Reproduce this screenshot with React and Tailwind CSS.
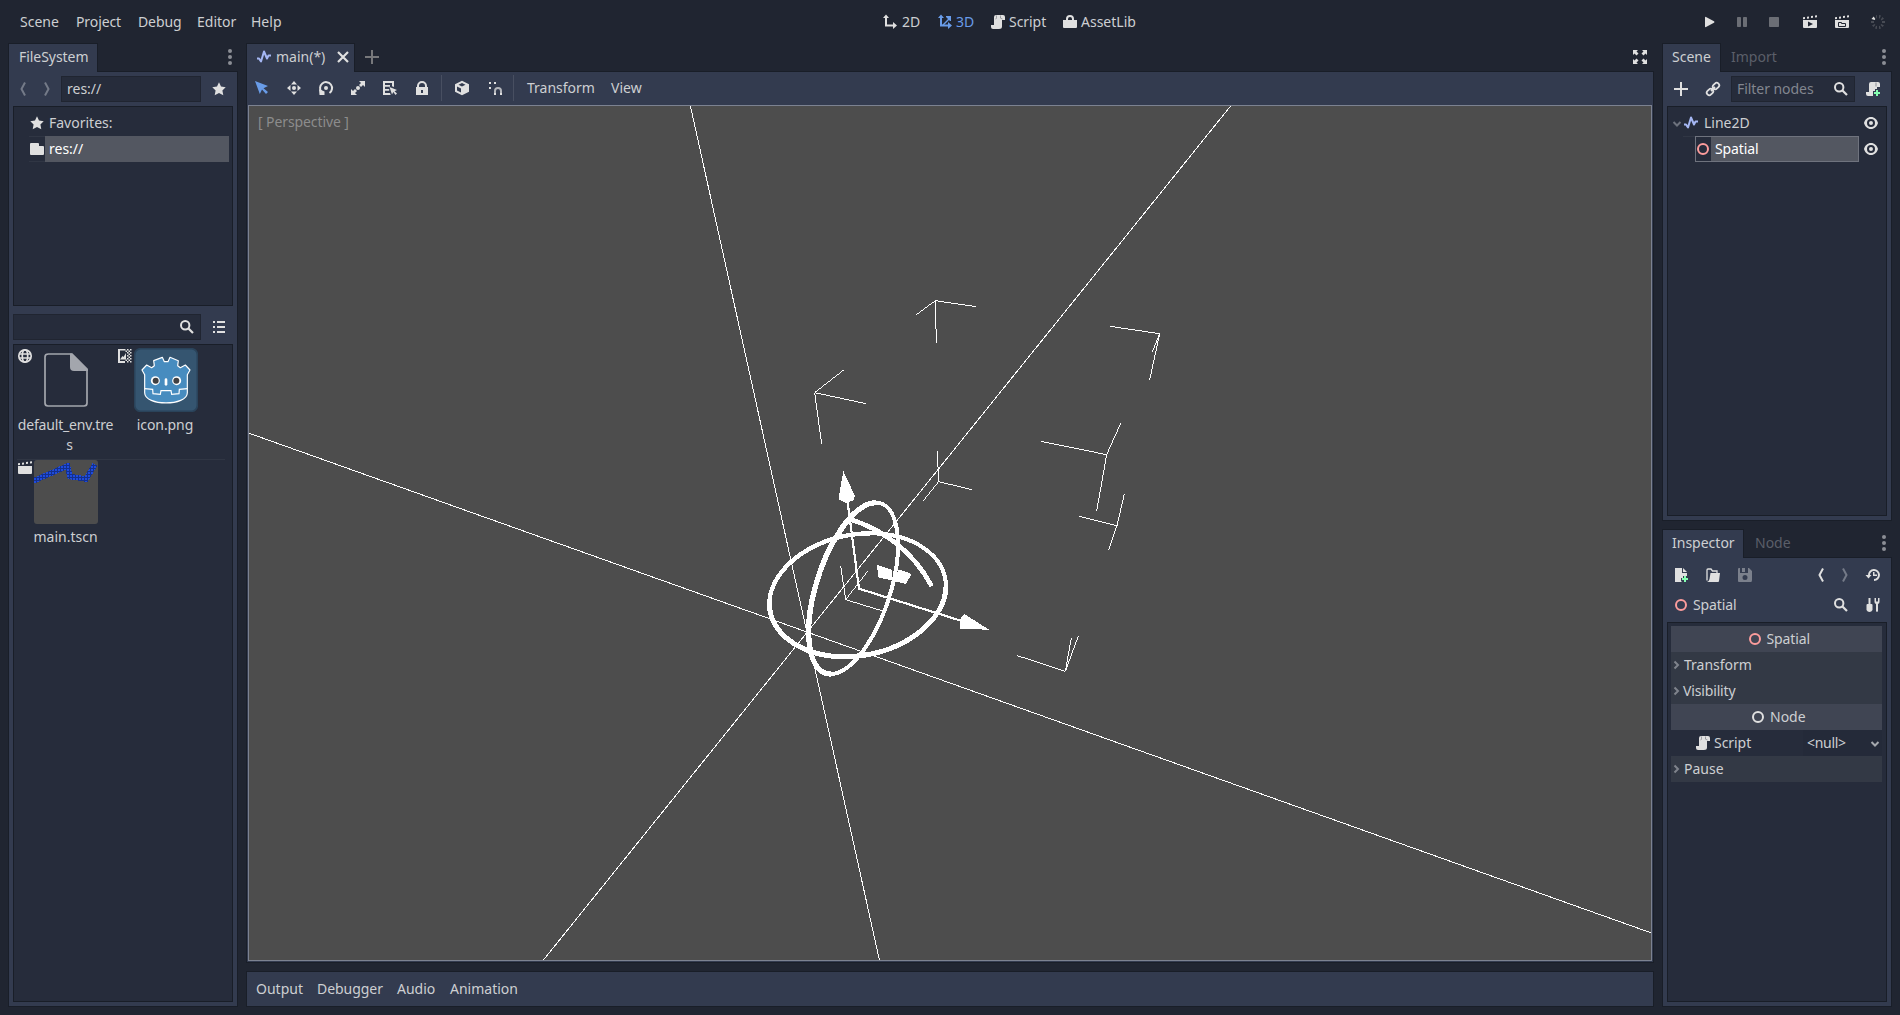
import React from "react";

const Icon = ({ className = "", children, fill = "#e0e0e0" }) => (
  <svg className={"h-4 w-4 shrink-0 " + className} viewBox="0 0 16 16" fill={fill}>
    {children}
  </svg>
);

const Star = (p) => (
  <Icon {...p}><path d="M8 1.300l2 4.200 4.700.700-3.300 3.300.900 4.800L8 12l-4.300 2.300.900-4.800L1.300 6.200 6 5.500z" /></Icon>
);
const Folder = (p) => (
  <Icon {...p}><path d="M2 2q-1 0-1 1v10q0 1 1 1h12q1 0 1-1V6q0-1-1-1h-4V3q0-1-1-1z" /></Icon>
);
const Search = (p) => (
  <Icon {...p}>
    <circle cx="6.200" cy="6.200" r="4.200" fill="none" stroke="#e0e0e0" strokeWidth="2" />
    <path d="M9.500 9.500L14 14" stroke="#e0e0e0" strokeWidth="2.200" />
  </Icon>
);
const Line2D = (p) => (
  <Icon {...p}>
    <path d="M1 10h2L5 13l3-10 3 7 1.500-3H15" transform="translate(0 -.5)" fill="none" stroke="#a5b7f3" strokeWidth="2" strokeLinejoin="round" />
  </Icon>
);
const Ring = ({ color = "#fc9c9c", className = "" }) => (
  <Icon className={className}><circle cx="8" cy="8" r="5" fill="none" stroke={color} strokeWidth="2" /></Icon>
);
const Chevron = ({ d, className = "", color = "#e0e0e0", w = 2 }) => (
  <Icon className={className}><path d={d} fill="none" stroke={color} strokeWidth={w} /></Icon>
);
const LEFT = "M10 1.500L6.500 8 10 14.500";
const RIGHT = "M6 1.500L9.500 8 6 14.500";
const Script = (p) => (
  <Icon {...p}>
    <path d="M6 1q-2 0-2 2v8H1v2q0 2 2 2h6q3 0 3-2.500V6h3V3q0-2-2-2z" />
    <path d="M6.500 1.500v2q0 1.500-1 1.500M10.500 1.500q-1 3.500 2 3.500" stroke="#202531" strokeOpacity=".35" fill="none" />
  </Icon>
);
const Eye = (p) => (
  <Icon {...p}>
    <path fillRule="evenodd" d="M8 2C4.500 2 2 4.500 1 8c1 3.500 3.500 6 7 6s6-2.500 7-6c-1-3.500-3.500-6-7-6zm0 2a4 4 0 110 8 4 4 0 010-8zm0 2a2 2 0 100 4 2 2 0 000-4z" />
  </Icon>
);
const Dots = () => (
  <svg className="h-4 w-[6px] shrink-0" viewBox="0 0 6 16" fill="#8b8e95">
    <circle cx="3" cy="2" r="2" /><circle cx="3" cy="8" r="2" /><circle cx="3" cy="14" r="2" />
  </svg>
);
const Clapper = ({ children, className }) => (
  <Icon className={className}>
    <path d="M1 3.300l2-.3v2l-2 .3zM5 2.700l2-.3v2l-2 .3zM9 2.100l2-.3v2l-2 .3zM13 1.500l2-.3v2l-2 .3z" />
    <path d="M1 6h14v7q0 1-1 1H2q-1 0-1-1z" />
    {children}
  </Icon>
);

const Panel = ({ className = "", children }) => (
  <div className={"border border-[#191e28] bg-[#333b4f] " + className}>{children}</div>
);
const Sunken = ({ className = "", children }) => (
  <div className={"border border-[#191e28] bg-[#262c3b] " + className}>{children}</div>
);
const Tab = ({ className = "", children }) => (
  <div className={"relative z-10 flex h-[29px] shrink-0 items-center border border-b-0 border-[#191e28] bg-[#333b4f] pb-[2px] " + className}>
    {children}
  </div>
);

function TopBar() {
  return (
    <header className="flex h-[43px] items-center">
      <nav className="flex h-[44px] w-[882px] items-center pl-5 whitespace-nowrap">
        <span className="w-14">Scene</span>
        <span className="w-[62px] tracking-[-0.1px]">Project</span>
        <span className="w-[59px] tracking-[-0.1px]">Debug</span>
        <span className="w-[54px]">Editor</span>
        <span>Help</span>
      </nav>
      <div className="flex h-[44px] w-[819px] items-center whitespace-nowrap">
        <Icon><path d="M4 1L1 4.500h2V13h8v2.500l4-3.500-4-3.500V11H5V4.500h2z" transform="translate(0 -.5)" /></Icon>
        <span className="ml-1 w-[35px]">2D</span>
        <Icon fill="#699ce8">
          <path d="M4 1L1 4.500h2V13h8v2.500l4-3.500-4-3.500V11H5V4.500h2z" transform="translate(0 -.5)" />
          <path d="M5 11l6-6-2-2V2h5v5h-1l-1-1-6 6z" />
        </Icon>
        <span className="ml-[3px] w-[34px] text-[#699ce8]">3D</span>
        <Script />
        <span className="ml-[3px] w-[53px] tracking-[-0.05px]">Script</span>
        <Icon><path fillRule="evenodd" d="M8 1a4 4 0 00-4 4v1H1v7q0 1 1 1h12q1 0 1-1V6h-3V5a4 4 0 00-4-4zm0 2a2 2 0 012 2v1H6V5a2 2 0 012-2z" /></Icon>
        <span className="ml-[3px]">AssetLib</span>
      </div>
      <div className="flex h-[44px] items-center">
        <Icon><path d="M4 3.500v9q0 1 1 .5l8-4.200q1-.8 0-1.500L5 3q-1-.5-1 .5z" /></Icon>
        <Icon className="ml-[17px]" fill="#6b6e75"><rect x="3" y="3" width="4" height="10" rx=".8" /><rect x="9" y="3" width="4" height="10" rx=".8" /></Icon>
        <Icon className="ml-4" fill="#6b6e75"><rect x="3" y="3" width="10" height="10" rx=".8" /></Icon>
        <Clapper className="ml-5"><path d="M6 7.500v5l5-2.500z" fill="#202531" /></Clapper>
        <Clapper className="ml-4"><path d="M4.500 8.500h3v1h4v3h-7z" fill="none" stroke="#202531" /></Clapper>
        <Icon className="ml-5" fill="#474b54">
          <path d="M6 1.500l1-.4v3l-.7.3zM9 1l2 .6-1.300 3-.7-.2zM12.500 3l1.500 1.700-2.700 1.700-.5-.8zM12 7h3v2h-3zM11.300 10l2.700 1.500L12.500 13 10.500 11zM9 12l.8-.3L11 14.400l-2 .6zM6 11.700l1 .3v3l-2-.6zM4.600 10l.8.8L3.500 13 2 11.500zM1 7h3v2H1z" />
          <path d="M3.700 2.500L5.300 5l-.7 1L1.500 5z" fill="#e0e0e0" />
        </Icon>
      </div>
    </header>
  );
}

function GodotIcon() {
  return (
    <svg className="h-16 w-16" viewBox="402 174 192 192">
      <rect x="404" y="176" width="188" height="188" rx="18" fill="#355570" stroke="#2a435a" strokeWidth="5" />
      <path
        d="M426 240L440 225 455 233 463 227 461 212 487 202 493 215H504L510 202 535 212 533 227 541 233 556 225 570 240 562 254V308C562 349 434 349 434 308V254z"
        fill="#478cbf" stroke="#fff" strokeWidth="3.500" strokeLinejoin="round"
      />
      <path d="M434 296L458 298 459 311 481 313 483 302H513L515 313 537 311 538 298 562 296" fill="none" stroke="#fff" strokeWidth="3.500" />
      <circle cx="466" cy="272" r="13.500" fill="#fff" />
      <circle cx="530" cy="272" r="13.500" fill="#fff" />
      <circle cx="467" cy="272" r="9" fill="#414042" />
      <circle cx="529" cy="272" r="9" fill="#414042" />
      <rect x="494" y="265" width="8" height="22" rx="4" fill="#fff" />
    </svg>
  );
}

function SceneThumb() {
  return (
    <svg className="h-16 w-16" viewBox="0 0 64 64">
      <defs>
        <pattern id="weave" width="3" height="3" patternUnits="userSpaceOnUse">
          <rect width="3" height="3" fill="#14308c" />
          <rect width="2" height="2" fill="#1f4bdc" />
        </pattern>
        <clipPath id="thumb"><rect width="64" height="64" rx="3" /></clipPath>
      </defs>
      <g clipPath="url(#thumb)">
        <rect width="64" height="64" fill="#4d4d4d" />
        <path d="M-2 21.500L33.500 6 36 16.500 52 19 61 4.500" fill="none" stroke="url(#weave)" strokeWidth="5.500" shapeRendering="crispEdges" />
      </g>
    </svg>
  );
}

function FileSystemDock() {
  return (
    <aside className="flex w-[230px] flex-col">
      <div className="flex h-7 items-start">
        <Tab className="w-[90px] pl-[10px]"><span className="tracking-[-0.05px]">FileSystem</span></Tab>
        <div className="ml-auto flex h-7 items-center pr-[5px]"><Dots /></div>
      </div>
      <Panel className="flex grow flex-col px-1 pt-1 pb-1">
        <div className="flex h-[26px] items-center">
          <Chevron d={LEFT} color="#747a88" className="ml-[2px]" />
          <Chevron d={RIGHT} color="#747a88" className="ml-2" />
          <Sunken className="ml-[6px] flex h-[26px] w-[140px] items-center border-[#202531] pl-[5px]">res://</Sunken>
          <Star className="ml-[10px]" />
        </div>
        <Sunken className="mt-1 h-[200px] pt-[3px]">
          <div className="flex h-[26px] items-center pl-[15px]">
            <Star /><span className="ml-1">Favorites:</span>
          </div>
          <div className="mr-[3px] ml-[15px] flex h-[26px] items-center border-y border-[#303644]">
            <Folder />
            <div className="flex h-[26px] grow items-center bg-[#535761] pl-1 text-white">res://</div>
          </div>
        </Sunken>
        <div className="mt-2 flex h-[26px] items-center">
          <Sunken className="flex h-[26px] w-[188px] items-center justify-end border-[#202531] pr-[5px]"><Search /></Sunken>
          <Icon className="ml-[10px]"><path d="M2 2h2v2H2zM6 2h8v2H6zM2 7h2v2H2zM6 7h8v2H6zM2 12h2v2H2zM6 12h8v2H6z" /></Icon>
        </div>
        <Sunken className="mt-1 grow px-[3px] pt-[3px]">
          <div className="flex h-[111px]">
            <div className="flex w-[100px] shrink-0">
              <Icon>
                <g fill="none" stroke="#e0e0e0" strokeWidth="1.700"><circle cx="8" cy="8" r="6.200" /><ellipse cx="8" cy="8" rx="2.700" ry="6.200" /><path d="M2 6h12M2 10h12" strokeWidth="1.300" /></g>
              </Icon>
              <div className="-ml-[16px] flex w-[97px] flex-col items-center">
                <svg className="h-16 w-16" viewBox="0 0 64 64">
                  <path d="M14.500 6h23.500L53 21v34q0 3-3 3H14q-3 0-3-3V9q0-3 3.500-3z" fill="none" stroke="#a3a6ad" strokeWidth="1.700" />
                  <path d="M36 5.500h2L54 21.500V23H40q-4 0-4-4z" fill="#a3a6ad" />
                </svg>
                <div className="mt-[3px] text-center leading-5 tracking-[-0.17px]">default_env.tre<br /><span className="ml-2">s</span></div>
              </div>
            </div>
            <div className="flex w-[100px]">
              <Icon>
                <path d="M1 1h6v1.500H3V13h5v2H1zM3 11.500l2.500-3.500 1 1L9 5v6.500z" />
                <path d="M7 1h1.500v1.500H7zM10 1h1.500v1.500H10zM13 1h1.500v1.500H13zM8.500 2.500H10V4H8.500zM11.500 2.500H13V4h-1.500zM10 4h1.500v1.500H10zM13 4h1.500v1.500H13zM11.500 5.500H13V7h-1.500zM10 7h1.500v1.500H10zM13 7h1.500v1.500H13zM11.500 8.500H13V10h-1.500zM10 10h1.500v1.500H10zM13 10h1.500v1.500H13zM8.500 11.500H10V13H8.500zM11.500 11.500H13V13h-1.500zM10 13h1.500v1.500H10zM13 13h1.500v1.500H13z" />
              </Icon>
              <div className="-ml-[16px] flex w-[98px] flex-col items-center">
                <GodotIcon />
                <div className="mt-[3px] -ml-[2px] leading-5 tracking-[-0.1px]">icon.png</div>
              </div>
            </div>
          </div>
          <div className="mr-1 flex border-t border-[#303644]">
            <Clapper className="mt-0" />
            <div className="-ml-[16px] flex w-[97px] flex-col items-center">
              <SceneThumb />
              <div className="mt-[3px] leading-5">main.tscn</div>
            </div>
          </div>
        </Sunken>
      </Panel>
    </aside>
  );
}

const CORNERS = [
  "M529 104L586 62 708 80M586 62L589 188",
  "M311 270L224 338 378 371M224 338L245 492",
  "M1110 139L1259 161 1237 215M1259 161L1229 300",
  "M903 484L1100 524 1142 430M1100 524L1070 693",
  "M592 513L596 605 696 629M596 605L550 662",
  "M1017 709L1131 737 1153 642M1131 737L1106 809",
  "M302 857L317 959 383 874M317 959L425 992",
  "M832 1127L976 1174 994 1074M976 1174L1015 1068",
];

function Viewport() {
  return (
    <svg className="block h-full w-full" viewBox="249 106 1402 854" shapeRendering="crispEdges" fill="none" stroke="#fff">
      <path d="M690.300 105.500L879.500 960.500M1231 105.500L543 960.500M248.500 433L1651.500 933" />
      <g transform="translate(740 280) scale(.33333)">
        {CORNERS.map((d) => <path key={d} d={d} strokeWidth="3" />)}
        <path d="M390 760A267.600 183.200 -11 0 0 88 966" strokeWidth="13" />
        <path d="M88 966A267.600 183.200 -11 0 0 618 920" strokeWidth="15" />
        <path d="M618 920A267.600 183.200 -11 0 0 390 760" strokeWidth="12" />
        <path d="M408 668A267.800 110.800 -72 0 0 272 1182" strokeWidth="16" />
        <path d="M408 668A267.800 110.800 -72 0 1 272 1182" strokeWidth="12" />
        <path d="M330 718C430 748 520 815 575 918" strokeWidth="14" />
        <path d="M322 660L357 926 662 1022" strokeWidth="6.500" />
        <g fill="#fff" stroke="none">
          <path d="M310 573L345 648 341 660 319 670 297 659 299 635zM673 1002L747 1049 660 1047 660 1018z" />
          <path d="M411 855L456 870 458 902 415 892zM476 868L515 882 497 912 460 903z" />
        </g>
      </g>
    </svg>
  );
}

function MainArea() {
  return (
    <main className="flex w-[1408px] flex-col">
      <div className="flex h-7 items-start">
        <Tab className="w-[109px] pl-[9px]">
          <Line2D /><span className="ml-[4px] w-[59px]">main(*)</span>
          <Icon><path d="M3 3l10 10M13 3L3 13" stroke="#e0e0e0" strokeWidth="2.200" /></Icon>
        </Tab>
        <div className="flex h-[27px] items-center pl-[9px]">
          <Icon><path d="M8 1v14M1 8h14" stroke="#77787b" strokeWidth="2" /></Icon>
        </div>
        <div className="ml-auto flex h-7 items-center pr-[6px]">
          <Icon>
            <path d="M1 1h5L4.500 2.500l2 2-2 2-2-2L1 6zM15 1v5l-1.500-1.500-2 2-2-2 2-2L10 1zM1 15v-5l1.500 1.500 2-2 2 2-2 2L6 15zM15 15h-5l1.500-1.500-2-2 2-2 2 2L15 10z" />
          </Icon>
        </div>
      </div>
      <Panel className="flex h-[892px] flex-col px-px">
        <div className="mb-px flex h-8 items-center pl-[6px]">
          <Icon fill="#699ce8"><path d="M1 1l4.800 13 2.200-4.500 4 4.500 2-2-4.500-3.800L14 6z" /></Icon>
          <Icon className="ml-4"><path d="M8 1l3 3.500H5zM8 15l3-3.500H5zM1 8l3.500-3v6zM15 8l-3.500-3v6z" /><circle cx="8" cy="8" r="2" /></Icon>
          <Icon className="ml-4">
            <path d="M11.500 13A6 6 0 103.500 12" fill="none" stroke="#e0e0e0" strokeWidth="2" />
            <circle cx="8" cy="8" r="2" /><path d="M1 9.500h1l4.500 2V15H1.500z" />
          </Icon>
          <Icon className="ml-4">
            <path d="M9 1h6v6l-2-2-2 2-2-2 2-2zM7 15H1V9l2 2 2-2 2 2-2 2z" /><circle cx="8" cy="8" r="2" />
          </Icon>
          <Icon className="ml-4">
            <path d="M1 1h11v6l-2-.7V3H3v10h5l.700 2H1zM3 5h5v1.700H3zM3 9h4.200v1.700H3z" />
            <path d="M7.500 7l2.500 7.500 1.300-2.500 2.200 3 1.500-1.500-2.500-2.300 2.500-1.200z" />
          </Icon>
          <Icon className="ml-4"><path fillRule="evenodd" d="M8 1a5 5 0 00-5 5v1H2v8h12V7h-1V6a5 5 0 00-5-5zm0 2a3 3 0 013 3v1H5V6a3 3 0 013-3zm-1 7h2v3H7z" /></Icon>
          <div className="ml-[11px] h-[26px] w-px bg-[#484f61]" />
          <Icon className="ml-3"><path fillRule="evenodd" d="M8 .8l7 3.500v7.400l-7 3.500-7-3.500V4.300zM8 3L4.500 4.800 8 6.500l3.500-1.700zM3 6.500v4L7 12.500v-4z" /></Icon>
          <Icon className="ml-[17px]">
            <path d="M2 2h2v2H2zM7 2h2v2H7zM2 7h2v2H2z" />
            <path d="M7 15v-4a4 4 0 018 0v4h-2v-4a2 2 0 00-4 0v4z" fillOpacity=".75" /><path d="M7 13h2v2H7zM13 13h2v2h-2z" />
          </Icon>
          <div className="ml-[10px] h-[26px] w-px bg-[#484f61]" />
          <span className="ml-[13px] w-[84px]">Transform</span>
          <span>View</span>
        </div>
        <div className="relative h-[856px] border border-[#7c8291] bg-[#4d4d4d]">
          <Viewport />
          <span className="absolute top-[6px] left-[9px] leading-5 tracking-[-0.1px] text-[#8c8c8c]">[ Perspective ]</span>
        </div>
      </Panel>
      <Panel className="mt-2 flex h-9 items-center pl-[9px]">
        <span className="w-[61px]">Output</span>
        <span className="w-[80px] tracking-[-0.05px]">Debugger</span>
        <span className="w-[53px]">Audio</span>
        <span>Animation</span>
      </Panel>
    </main>
  );
}

function SceneDock() {
  return (
    <section>
      <div className="flex h-7 items-start">
        <Tab className="w-[59px] pl-[9px]">Scene</Tab>
        <span className="ml-[10px] leading-7 text-[#5b5f69]">Import</span>
        <div className="ml-auto flex h-7 items-center pr-[5px]"><Dots /></div>
      </div>
      <Panel className="h-[450px] px-1 pt-1">
        <div className="flex h-[26px] items-center">
          <Icon className="ml-[6px]"><path d="M8 1v14M1 8h14" stroke="#e0e0e0" strokeWidth="2" /></Icon>
          <Icon className="ml-4">
            <g fill="none" stroke="#e0e0e0" strokeWidth="1.800"><rect x="-3.500" y="-2.500" width="7" height="5" rx="2.500" transform="translate(5 11) rotate(-45)" /><rect x="-3.500" y="-2.500" width="7" height="5" rx="2.500" transform="translate(11 5) rotate(-45)" /><path d="M6 10l4-4" /></g>
          </Icon>
          <Sunken className="ml-[10px] flex h-[26px] w-[124px] items-center border-[#202531] pl-[5px] text-[#82868f]">
            <span className="tracking-[-0.05px]">Filter nodes</span><Search className="mr-[5px] ml-auto" />
          </Sunken>
          <Icon className="ml-[10px]">
            <path d="M6 1q-2 0-2 2v8H1v2q0 2 2 2h5v-5h2V8h2V6h3V3q0-2-2-2z" />
            <path d="M11 1.500v4" stroke="#8a8d94" /><path d="M11 9h2v2h2v2h-2v2h-2v-2H9v-2h2z" fill="#84ffb1" />
          </Icon>
        </div>
        <Sunken className="mt-1 h-[410px] pt-[3px]">
          <div className="flex h-[26px] items-center">
            <Chevron d="M4.500 6L8 9.500 11.500 6" color="#6d727d" className="ml-[1px] translate-y-px" />
            <Line2D className="-ml-[2px]" />
            <span className="ml-[5px]">Line2D</span>
            <Eye className="mr-[7px] ml-auto" />
          </div>
          <div className="flex h-[26px] items-center">
            <div className="ml-[15px] h-[26px] w-3 border-t border-[#303644]" />
            <div className="flex h-[26px] w-[164px] items-center border border-[#6f737e]">
              <Ring className="-ml-px" />
              <div className="flex h-6 grow items-center bg-[#535761] pl-1 tracking-[-0.1px] text-white">Spatial</div>
            </div>
            <Eye className="mr-[7px] ml-auto" />
          </div>
        </Sunken>
      </Panel>
    </section>
  );
}

const Section = ({ children, className = "" }) => (
  <div className="flex h-[26px] items-center bg-[#333945]">
    <Chevron d="M6.500 4.500L10 8l-3.500 3.500" color="#7f838c" className="-ml-[3px]" />
    <span className={className}>{children}</span>
  </div>
);

function InspectorDock() {
  return (
    <section className="mt-2 flex grow flex-col">
      <div className="flex h-7 items-start">
        <Tab className="w-[82px] pl-[9px]">Inspector</Tab>
        <span className="ml-[11px] leading-7 text-[#5b5f69]">Node</span>
        <div className="ml-auto flex h-7 items-center pr-[5px]"><Dots /></div>
      </div>
      <Panel className="flex grow flex-col px-1 pt-1 pb-1">
        <div className="flex h-[26px] items-center">
          <Icon className="ml-[6px]">
            <path d="M2 1h7v5h5v3h-4v2H8v3.500h1V15H2z" /><path d="M10 1l4 4h-4z" />
            <path d="M11 9h2v2h2v2h-2v2h-2v-2H9v-2h2z" fill="#84ffb1" />
          </Icon>
          <Icon className="ml-4">
            <path d="M2 13.500V3q0-1 1-1h3l1.500 2H12v2" fill="none" stroke="#e0e0e0" strokeWidth="1.300" />
            <path d="M5.500 6H15l-1 8q0 1-1 1H2q2-.5 2.500-3z" />
          </Icon>
          <Icon className="ml-4" fill="#7b808c">
            <path fillRule="evenodd" d="M2 1h1v5h8V1h1l3 3v9q0 2-1 2H2q-1 0-1-1V2q0-1 1-1zm6 7a2.500 2.500 0 100 5 2.500 2.500 0 000-5z" /><path d="M5 1h3v4H5z" />
          </Icon>
          <Chevron d={LEFT} className="ml-[60px]" />
          <Chevron d={RIGHT} color="#747a88" className="ml-2" />
          <Icon className="ml-3">
            <path d="M4 9a5 5 0 115 4.700" fill="none" stroke="#e0e0e0" strokeWidth="2" transform="translate(0 -.7)" />
            <path d="M.500 8h6L3.500 11.500zM8 5h1.500v2.500H12V9H8z" />
          </Icon>
        </div>
        <div className="mt-1 flex h-[26px] items-center">
          <Ring className="ml-[6px]" />
          <span className="ml-1 tracking-[-0.1px]">Spatial</span>
          <Search className="ml-auto" />
          <Icon className="mr-[6px] ml-4">
            <path d="M3 1h2v6h1q1 0 1 1v5q-1 2-3 2t-3-2V8q0-1 1-1h1zM9 1v4q0 1.500 1.500 2v7q1 2 2 0V7Q14 6.500 14 5V1h-1.500v3.500h-2V1z" transform="translate(.5 0)" />
          </Icon>
        </div>
        <Sunken className="mt-1 grow py-[3px] pr-[4px] pl-[3px]">
          <div className="flex h-[26px] items-center bg-[#404553] pl-[76px]"><Ring /><span className="ml-[3.500px] tracking-[-0.1px]">Spatial</span></div>
          <Section>Transform</Section>
          <Section className="-ml-px tracking-[-0.15px]">Visibility</Section>
          <div className="flex h-[26px] items-center bg-[#404553] pl-[79px]"><Ring color="#e0e0e0" /><span className="ml-1">Node</span></div>
          <div className="flex h-[26px] items-center pl-6">
            <Script /><span className="ml-[3px] w-[89px] tracking-[-0.05px]">Script</span>
            <div className="flex h-[26px] grow items-center bg-[#242a39] pl-1 tracking-[-0.3px]">
              &lt;null&gt;<Chevron d="M4.500 6L8 9.500 11.500 6" color="#a5a8ae" className="-mr-[1px] ml-auto translate-y-px" />
            </div>
          </div>
          <Section>Pause</Section>
        </Sunken>
      </Panel>
    </section>
  );
}

export default function App() {
  return (
    <div className="flex h-[1015px] w-[1900px] flex-col overflow-hidden bg-[#202531] font-['Noto_Sans',sans-serif] text-[14px] leading-5 text-[#cdcfd2]">
      <TopBar />
      <div className="flex h-[964px] gap-2 px-2">
        <FileSystemDock />
        <MainArea />
        <aside className="flex w-[230px] flex-col">
          <SceneDock />
          <InspectorDock />
        </aside>
      </div>
    </div>
  );
}
